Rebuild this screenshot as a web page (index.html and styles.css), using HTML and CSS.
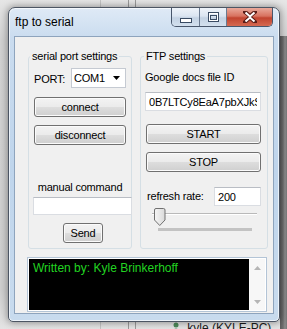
FILE: index.html
```html
<!DOCTYPE html>
<html lang="en">
<head>
  <meta charset="UTF-8" />
  <meta name="viewport" content="width=device-width, initial-scale=1" />
  <title>ftp to serial</title>
  <link rel="stylesheet" href="styles.css">
</head>
<body>
  <!-- desktop behind the window -->
  <div class="desktop">
    <div class="line line-a"></div>
    <div class="line line-b"></div>
    <div class="line line-c"></div>
    <div class="side-strip"></div>
    <div class="user-item">
      <svg class="user-icon" width="10" height="10" viewBox="0 0 10 10"><circle cx="5" cy="3" r="2.5" fill="#4d8a5a"/><path d="M0 10 Q5 3 10 10 Z" fill="#4d8a5a"/></svg>
      kyle (KYLE-PC)
    </div>
  </div>

  <div class="window">
    <div class="titlebar">
      <span class="title">ftp to serial</span>
      <div class="caption-buttons">
        <span class="cap cap-min">
          <svg width="12" height="5" viewBox="0 0 12 5"><rect x="0.5" y="0.5" width="11" height="4" fill="#fff" stroke="#394b63"/></svg>
        </span>
        <span class="cap cap-max">
          <svg width="11" height="10" viewBox="0 0 11 10"><rect x="0.5" y="0.5" width="10" height="9" fill="none" stroke="#394b63"/><rect x="1.5" y="1.5" width="8" height="7" fill="none" stroke="#fff"/><rect x="2.5" y="3.5" width="6" height="4" fill="none" stroke="#394b63"/></svg>
        </span>
        <span class="cap cap-close">
          <svg width="14" height="12" viewBox="0 0 14 12"><path d="M2 1 L7 5 L12 1 M2 11 L7 6.5 L12 11" fill="none" stroke="#5a1e18" stroke-width="4" stroke-linecap="square"/><path d="M2.5 1.5 L7 5.5 L11.5 1.5 M2.5 10.5 L7 6.5 L11.5 10.5" fill="none" stroke="#fff" stroke-width="2"/></svg>
        </span>
      </div>
    </div>

    <div class="client">
      <div class="groups">
        <fieldset class="group group-serial">
          <legend>serial port settings</legend>

          <div class="port-row">
            <span class="port-label">PORT:</span>
            <div class="combo">
              <span>COM1</span>
              <svg width="7" height="4" viewBox="0 0 7 4"><path d="M0 0 H7 L3.5 4 Z" fill="#000"/></svg>
            </div>
          </div>

          <button class="btn btn-wide btn-connect">connect</button>
          <button class="btn btn-wide btn-disconnect">disconnect</button>

          <div class="manual-label">manual command</div>
          <input class="textbox manual-input" type="text" value="">
          <button class="btn btn-send">Send</button>
        </fieldset>

        <fieldset class="group group-ftp">
          <legend>FTP settings</legend>

          <div class="docs-label">Google docs file ID</div>
          <input class="textbox docs-input" type="text" value="0B7LTCy8EaA7pbXJkS">
          <button class="btn btn-ftp btn-start">START</button>
          <button class="btn btn-ftp btn-stop">STOP</button>

          <div class="rate-row">
            <span class="rate-label">refresh rate:</span>
            <input class="textbox rate-input" type="text" value="200">
          </div>

          <svg class="slider" width="116" height="26" viewBox="0 0 116 26">
            <defs>
              <linearGradient id="thumb" x1="0" y1="0" x2="1" y2="0">
                <stop offset="0" stop-color="#f6f6f6"/>
                <stop offset="1" stop-color="#d9d9d9"/>
              </linearGradient>
            </defs>
            <rect x="7" y="7" width="105" height="1" fill="#b9b9b9"/>
            <rect x="7" y="8" width="105" height="1" fill="#ffffff"/>
            <rect x="13" y="22" width="94" height="3" fill="#c3c3c3"/>
            <path d="M9.5 4 Q9.5 2.5 11 2.5 H18.5 Q20 2.5 20 4 V14 L14.75 19.5 L9.5 14 Z" fill="url(#thumb)" stroke="#707070"/>
          </svg>
        </fieldset>
      </div>

      <div class="console">
        <div class="console-output">Written by: Kyle Brinkerhoff</div>
        <div class="console-scroll">
          <span class="arrow"><svg width="7" height="4" viewBox="0 0 7 4"><path d="M0 4 H7 L3.5 0 Z" fill="#b5b5b5"/></svg></span>
          <span class="arrow"><svg width="7" height="4" viewBox="0 0 7 4"><path d="M0 0 H7 L3.5 4 Z" fill="#b5b5b5"/></svg></span>
        </div>
      </div>
    </div>
  </div>
</body>
</html>
```

FILE: styles.css
```css
body {
  margin: 0;
  width: 287px;
  height: 329px;
  overflow: hidden;
  position: relative;
  background: #d9d9d9;
  font-family: "Liberation Sans", Arial, sans-serif;
  color: #000;
}

/* desktop stuff behind the window */
.desktop {
  position: absolute;
  inset: 0;
  background: linear-gradient(to bottom, #e6e6e6 0, #d2d2d2 40px, #cfcfcf 290px, #e4e4e4 100%);
}

.line {
  position: absolute;
  top: 0;
  bottom: 0;
  width: 1px;
  background: #9a9a9a;
}

.line-a { left: 100px; background: #c4c4c4; }
.line-b { left: 128px; }
.line-c { left: 135px; }

.side-strip {
  position: absolute;
  left: 280px;
  top: 36px;
  width: 7px;
  bottom: 0;
  background: linear-gradient(to right, #5e5e5e 0, #6e6e6e 3px, #8c8c8c 5px, #767676 100%);
}

.user-item {
  position: absolute;
  left: 171px;
  top: 321px;
  font-size: 12px;
  color: #1b1b1b;
  white-space: nowrap;
}

.user-icon {
  margin-right: 3px;
}

/* window frame */
.window {
  position: absolute;
  left: 8px;
  top: 7px;
  width: 272px;
  height: 315px;
  box-sizing: border-box;
  padding: 0 5px 7px 5px;
  border: 1px solid #4c5563;
  border-radius: 7px 7px 5px 5px;
  background: linear-gradient(to bottom, #dfeaf6 0, #cadcef 30px, #bfd5ec 160px, #c8dbee 100%);
  box-shadow: inset 0 0 0 1px rgba(255,255,255,0.65), 0 0 7px 1px rgba(0,0,0,0.35);
  display: flex;
  flex-direction: column;
}

.titlebar {
  height: 28px;
  display: flex;
  justify-content: space-between;
  align-items: flex-start;
  flex-shrink: 0;
}

.title {
  padding: 7px 0 0 1px;
  font-size: 12px;
  line-height: 15px;
}

.caption-buttons {
  display: flex;
  margin-right: 1px;
  border: 1px solid #48566b;
  border-top: none;
  border-radius: 0 0 5px 5px;
  overflow: hidden;
  height: 18px;
}

.cap {
  display: flex;
  align-items: center;
  justify-content: center;
  height: 18px;
}

.cap-min,
.cap-max {
  background: linear-gradient(to bottom, #eef3f9 0, #dbe5f1 45%, #c3d2e3 55%, #d3e0ee 100%);
  border-right: 1px solid #6a7a90;
}

.cap-min { width: 27px; }
.cap-min svg { margin-top: 6px; }
.cap-max { width: 26px; }

.cap-close {
  width: 45px;
  background: linear-gradient(to bottom, #e9a99b 0, #d8725f 45%, #c1442f 55%, #d56a52 100%);
}

/* client area */
.client {
  height: 278px;
  box-sizing: border-box;
  background: #f0f0f0;
  border: 1px solid #8ea4bd;
  padding: 13px 0 0 12px;
}

.groups {
  display: flex;
  gap: 8px;
  margin-left: 1px;
  height: 199px;
}

.group {
  margin: 0;
  min-width: 0;
  box-sizing: border-box;
  border: 1px solid #d5dfe5;
  border-radius: 3px;
  font-size: 11px;
  letter-spacing: -0.2px;
  line-height: 13px;
}

.group legend {
  padding: 0 2px;
  line-height: 13px;
}

.group-serial {
  width: 104px;
  padding: 0 5px;
}

.group-serial legend {
  margin-left: -4px;
}

.group-ftp {
  width: 128px;
  padding: 0 6px 0 4px;
}

.group-ftp legend {
  margin-left: -1px;
}

.port-row {
  margin-top: 5px;
  height: 20px;
  display: flex;
  justify-content: space-between;
  align-items: center;
}

.port-label {
  margin-top: 3px;
}

.combo {
  width: 55px;
  height: 20px;
  box-sizing: border-box;
  border: 1px solid #c5cad2;
  background: #fff;
  display: flex;
  align-items: center;
  justify-content: space-between;
  padding: 0 5px 0 2px;
  font-size: 11px;
}

.btn {
  display: block;
  height: 20px;
  box-sizing: border-box;
  padding: 0;
  border: 1px solid #707070;
  border-radius: 3px;
  background: linear-gradient(to bottom, #f3f3f3 0, #ebebeb 48%, #dddddd 52%, #cfcfcf 100%);
  box-shadow: inset 0 0 0 1px #fbfbfb;
  font-family: "Liberation Sans", Arial, sans-serif;
  font-size: 11px;
  letter-spacing: -0.2px;
  line-height: 18px;
  color: #000;
  text-align: center;
}

.btn-wide {
  width: 92px;
}

.btn-connect { margin-top: 9px; }
.btn-disconnect { margin-top: 8px; }

.manual-label {
  margin-top: 36px;
  text-align: center;
}

.textbox {
  display: block;
  box-sizing: border-box;
  margin: 0;
  padding: 0 3px;
  border: 1px solid #dadde2;
  border-top-color: #b9bdc4;
  background: #fff;
  font-family: "Liberation Sans", Arial, sans-serif;
  font-size: 11px;
  letter-spacing: -0.2px;
  color: #000;
  outline: none;
}

.manual-input {
  margin: 3px 0 0 -1px;
  width: 99px;
  height: 18px;
}

.btn-send {
  margin: 8px 0 0 29px;
  width: 40px;
}

.docs-label {
  margin-top: 8px;
}

.docs-input {
  margin-top: 8px;
  width: 116px;
  height: 19px;
}

.btn-ftp {
  width: 115px;
  margin-left: 1px;
}

.btn-start { margin-top: 13px; }
.btn-stop { margin-top: 8px; }

.rate-row {
  margin-top: 15px;
  height: 19px;
  display: flex;
  justify-content: space-between;
  align-items: center;
}

.rate-label {
  margin-left: 2px;
}

.rate-input {
  width: 47px;
  height: 19px;
}

.slider {
  display: block;
}

/* output console */
.console {
  margin-top: 8px;
  width: 240px;
  height: 55px;
  box-sizing: border-box;
  border: 1px solid #b3c4d6;
  padding: 1px;
  background: #fff;
  display: flex;
}

.console-output {
  width: 220px;
  background: #000;
  color: #22d422;
  font-size: 12px;
  line-height: 14px;
  padding: 2px 4px;
  box-sizing: border-box;
  white-space: nowrap;
}

.console-scroll {
  width: 16px;
  display: flex;
  flex-direction: column;
  justify-content: space-between;
  align-items: center;
  padding: 7px 0 6px;
  background: #f7f7f7;
}

.arrow {
  display: flex;
  height: 4px;
}
```
